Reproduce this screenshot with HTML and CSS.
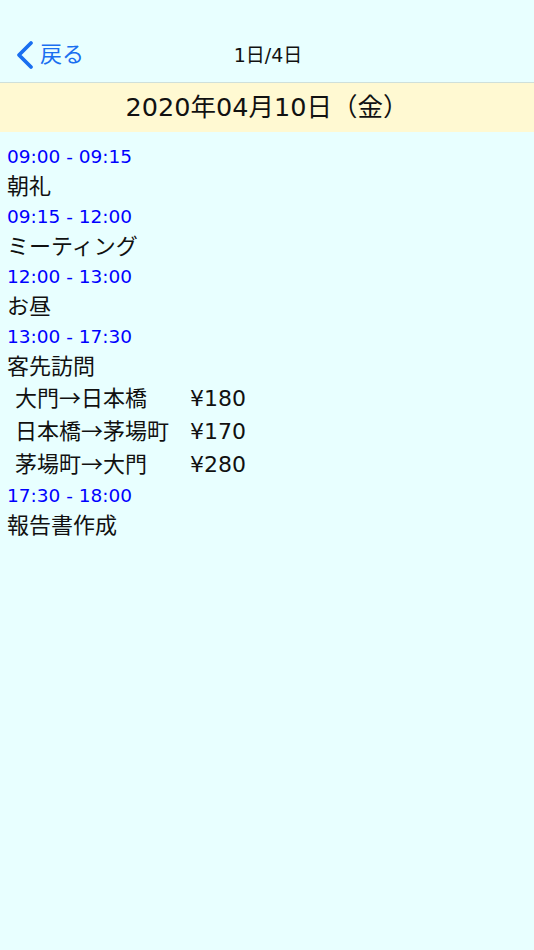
FILE: index.html
```html
<!DOCTYPE html>
<html lang="ja">
<head>
    <meta charset="UTF-8">
    <meta name="viewport" content="width=device-width, initial-scale=1.0">
    <title>日報</title>
    <link rel="stylesheet" href="styles.css">
</head>
<body>
    <!-- ナビゲーションバー -->
    <header class="navbar">
        <a class="back" href="#">
            <svg class="chevron" width="20" height="30" viewBox="0 0 20 30">
                <path d="M16 3 L4 15 L16 27" fill="none" stroke="#1a6ff0" stroke-width="3.8" stroke-linecap="round" stroke-linejoin="round"/>
            </svg>
            <span class="back-label">戻る</span>
        </a>
        <div class="page">1日/4日</div>
    </header>

    <div class="date-bar">2020年04月10日（金）</div>

    <main class="schedule">
        <div class="time">09:00 - 09:15</div>
        <div class="task">朝礼</div>

        <div class="time">09:15 - 12:00</div>
        <div class="task">ミーティング</div>

        <div class="time">12:00 - 13:00</div>
        <div class="task">お昼</div>

        <div class="time">13:00 - 17:30</div>
        <div class="task">客先訪問</div>
        <div class="routes">
            <span>大門<span class="arrow">→</span>日本橋</span><span>¥180</span>
            <span>日本橋<span class="arrow">→</span>茅場町</span><span>¥170</span>
            <span>茅場町<span class="arrow">→</span>大門</span><span>¥280</span>
        </div>

        <div class="time">17:30 - 18:00</div>
        <div class="task">報告書作成</div>
    </main>
</body>
</html>
```

FILE: styles.css
```css
body {
    margin: 0;
    background-color: #e8ffff;
    color: #111;
    font-family: "DejaVu Sans", "Noto Sans CJK JP", sans-serif;
}
.navbar {
    position: relative;
    height: 82px;
    border-bottom: 1px solid #cfe0da;
    display: flex;
    justify-content: center;
}
.back {
    position: absolute;
    left: 15px;
    top: 40px;
    display: flex;
    align-items: flex-start;
    gap: 5px;
    color: #1a6ff0;
    text-decoration: none;
    font-size: 22px;
}
.back-label {
    line-height: 26px;
    margin-top: 2px;
}
.chevron {
    display: block;
}
.page {
    font-size: 19px;
    line-height: 24px;
    padding-top: 43px;
    padding-left: 2px;
}
.date-bar {
    height: 49px;
    line-height: 49px;
    background-color: #fff9d2; /* 薄い黄色 */
    text-align: center;
    font-size: 25.5px;
}
.schedule {
    padding: 10px 7px;
}
.time {
    color: #0000ff;
    font-size: 18.5px;
    line-height: 30px;
}
.task {
    font-size: 22px;
    line-height: 30px;
}
.routes {
    display: grid;
    grid-template-columns: 175px auto;
    grid-auto-rows: 33px;
    padding-left: 8px;
    font-size: 22px;
    line-height: 33px;
}
.arrow {
    font-family: "Noto Sans CJK JP", sans-serif;
    line-height: 1;
}
```
